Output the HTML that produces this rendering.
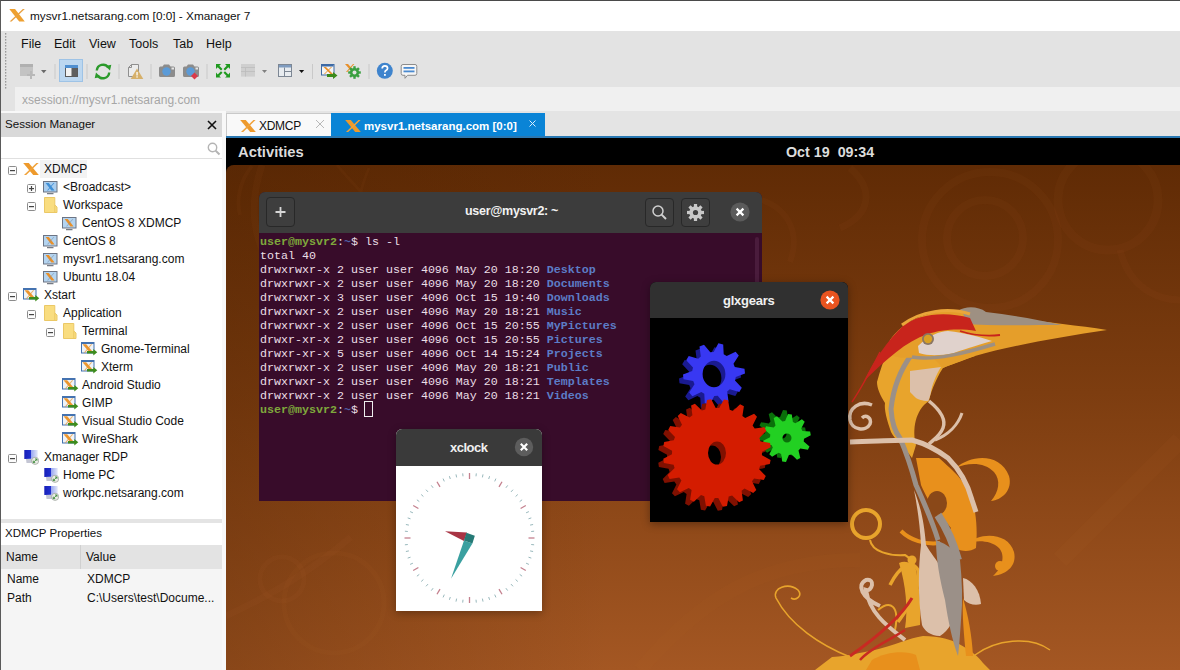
<!DOCTYPE html>
<html><head><meta charset="utf-8">
<style>
*{margin:0;padding:0;box-sizing:border-box}
html,body{width:1180px;height:670px;overflow:hidden;background:#fff;font-family:"Liberation Sans",sans-serif;font-size:12px;color:#000}
.a{position:absolute;white-space:nowrap}
#title{left:0;top:0;width:1180px;height:31px;background:#fff;border-top:1px solid #4a4a4a;border-left:1px solid #5a5a5a}
#tools{left:0;top:31px;width:1180px;height:56px;background:#e3e3e3;border-left:1px solid #5a5a5a}
#addr{left:0;top:87px;width:1180px;height:24px;background:#e3e3e3;border-left:1px solid #5a5a5a}
#tabs{left:226px;top:111px;width:954px;height:25px;background:#e4e4e4}
#blue{left:226px;top:136px;width:954px;height:2px;background:#2a78b2}
#leftpane{left:0;top:111px;width:226px;height:559px;background:#f8f8f8;border-left:1px solid #5a5a5a}
.menu{top:37px;font-size:12.5px;color:#111}
.tree{font-size:12px;color:#111}
.mono{font-family:"Liberation Mono",monospace;font-size:11.67px;line-height:14px;color:#ebdfe6}
.pg{color:#7fa83c;font-weight:bold}
.pc{color:#5060a8;font-weight:bold}
.dir{color:#5c7cc6;font-weight:bold}
.cur{display:inline-block;width:8.5px;height:15.5px;border:1px solid #eee;vertical-align:-3px}
</style></head><body>
<svg width="0" height="0" style="position:absolute">
<defs>
<symbol id="xlogo" viewBox="0 0 16 13">
<path d="M0.3 0 L6 0 L15.8 12.5 L10.2 12.5 Z" fill="#eea030"/>
<path d="M13.8 0 L15.8 0 L2.6 12.5 L0.6 12.5 Z" fill="#e8a040"/>
</symbol>

<symbol id="xo" viewBox="0 0 16 12">
<path d="M0.2 0 H5.8 L15.8 12 H10.2 Z" fill="#ee9a2c"/>
<path d="M13.4 0 H15.6 L3.2 12 H1 Z" fill="#f0a23a"/>
</symbol>
<symbol id="sess" viewBox="0 0 15 14">
<rect x="0.5" y="0.5" width="13.5" height="10.5" fill="#b4d4f0" stroke="#6c7484"/>
<path d="M2.6 2 H5.8 L11.6 9.6 H8.4 Z" fill="#e8902a"/>
<path d="M10.4 2 H11.4 L5 9.6 H4 Z" fill="#7c8ea0" fill-opacity="0.6"/>
<rect x="4" y="12.2" width="6.5" height="1" fill="#555b66"/>
</symbol>
<symbol id="bcast" viewBox="0 0 15 14">
<rect x="0.5" y="0.5" width="13.5" height="10.5" fill="#a9cdee" stroke="#6c7484"/>
<path d="M2.6 2 H5.8 L11.6 9.6 H8.4 Z" fill="#3f8fd6"/>
<path d="M10.4 2 H11.4 L5 9.6 H4 Z" fill="#3f8fd6"/>
<rect x="4" y="12.2" width="6.5" height="1" fill="#555b66"/>
</symbol>
<symbol id="folder" viewBox="0 0 14 16">
<path d="M0.5 0.5 H10.8 V8 L13 10 V15.5 H0.5 Z" fill="#f9dd80" stroke="#ebc866"/>
<path d="M10.8 8 V15.5" stroke="#ebc866"/>
</symbol>
<symbol id="xstart" viewBox="0 0 17 15">
<rect x="0.5" y="0.5" width="12.5" height="10.5" fill="#eef3f8" stroke="#4573b0"/>
<rect x="0.5" y="0.5" width="12.5" height="1.5" fill="#4573b0"/>
<path d="M1.5 2.2 H5.2 L12.6 10.8 H8.9 Z" fill="#ec962e"/>
<path d="M10 2.2 H11.2 L4 10.8 H2.8 Z" fill="#ec962e" fill-opacity="0.75"/>
<path d="M6 9 H12.3 V7 L16.3 10.3 L12.3 13.6 V11.6 H6 Z" fill="#3d8c1c"/>
</symbol>
<symbol id="rdp" viewBox="0 0 16 15">
<defs><linearGradient id="rg" x1="0" x2="1" y1="0" y2="0"><stop offset="0" stop-color="#1820b8"/><stop offset="0.48" stop-color="#2030d0"/><stop offset="0.52" stop-color="#9aa8f0"/><stop offset="1" stop-color="#e4e8f8"/></linearGradient></defs>
<path d="M1.3 0 H14.7 V8.5 L1.3 9 Z" fill="url(#rg)"/>
<path d="M3 9 H10 L10.5 13 H3.5 Z" fill="#c4c6d4"/>
<circle cx="12.1" cy="10.8" r="3.6" fill="#eceee8" stroke="#a0a4a0" stroke-width="0.8"/>
<path d="M10.3 12.6 L13.9 9 M12 9 H13.9 V10.9 M10.3 10.7 V12.6 H12.2" fill="none" stroke="#3d8a3a" stroke-width="0.9"/>
</symbol>
<symbol id="em" viewBox="0 0 9 9">
<rect x="0.5" y="0.5" width="8" height="8" rx="1" fill="#fcfcfc" stroke="#8c8c8c"/>
<rect x="2" y="4" width="5" height="1.2" fill="#444"/>
</symbol>
<symbol id="ep" viewBox="0 0 9 9">
<rect x="0.5" y="0.5" width="8" height="8" rx="1" fill="#fcfcfc" stroke="#8c8c8c"/>
<rect x="2" y="4" width="5" height="1.2" fill="#444"/>
<rect x="3.9" y="2" width="1.2" height="5" fill="#444"/>
</symbol>
</defs>
</svg>

<!-- title bar -->
<div class="a" id="title"></div>
<svg class="a" style="left:9px;top:9px" width="16" height="13"><use href="#xlogo"/></svg>
<div class="a" style="left:30px;top:9px;font-size:11.8px;color:#111">mysvr1.netsarang.com [0:0] - Xmanager 7</div>

<!-- toolbar -->
<div class="a" id="tools"></div>
<div class="a" id="addr"></div>
<div class="a" style="left:15px;top:87px;width:1165px;height:24px;background:#f0f0f0"></div>
<div class="a" style="left:22px;top:93px;font-size:12px;color:#a6a6a6">xsession://mysvr1.netsarang.com</div>

<div class="a menu" style="left:21px">File</div>
<div class="a menu" style="left:54px">Edit</div>
<div class="a menu" style="left:89px">View</div>
<div class="a menu" style="left:129px">Tools</div>
<div class="a menu" style="left:173px">Tab</div>
<div class="a menu" style="left:206px">Help</div>


<!-- toolbar icons -->
<svg class="a" style="left:0;top:0" width="430" height="90" viewBox="0 0 430 90">
<!-- gripper -->
<g fill="#9a9a9a"><rect x="5" y="33" width="1.3" height="1.6"/><rect x="5" y="36" width="1.3" height="1.6"/><rect x="5" y="39" width="1.3" height="1.6"/><rect x="5" y="42" width="1.3" height="1.6"/><rect x="5" y="45" width="1.3" height="1.6"/><rect x="5" y="48" width="1.3" height="1.6"/><rect x="5" y="51" width="1.3" height="1.6"/><rect x="5" y="54" width="1.3" height="1.6"/><rect x="5" y="57" width="1.3" height="1.6"/><rect x="5" y="60" width="1.3" height="1.6"/><rect x="5" y="63" width="1.3" height="1.6"/><rect x="5" y="66" width="1.3" height="1.6"/><rect x="5" y="69" width="1.3" height="1.6"/><rect x="5" y="72" width="1.3" height="1.6"/><rect x="5" y="75" width="1.3" height="1.6"/><rect x="5" y="78" width="1.3" height="1.6"/><rect x="5" y="81" width="1.3" height="1.6"/><rect x="5" y="84" width="1.3" height="1.6"/><rect x="5" y="87" width="1.3" height="1.6"/><rect x="5" y="90" width="1.3" height="1.6"/><rect x="5" y="93" width="1.3" height="1.6"/><rect x="5" y="96" width="1.3" height="1.6"/><rect x="5" y="99" width="1.3" height="1.6"/><rect x="5" y="102" width="1.3" height="1.6"/><rect x="5" y="105" width="1.3" height="1.6"/><rect x="5" y="108" width="1.3" height="1.6"/></g>
<!-- new (grey) -->
<rect x="20" y="64" width="13" height="12" fill="#c3c3c3"/>
<rect x="20" y="64" width="13" height="3" fill="#b0b0b0"/>
<path d="M31 71 v8 M27 75 h8" stroke="#b8b8b8" stroke-width="2"/>
<path d="M41 70 h5.5 l-2.75 3.2 z" fill="#6a6a6a"/>
<g fill="#c9c9c9"><rect x="54.5" y="64" width="1" height="15"/><rect x="86.5" y="64" width="1" height="15"/><rect x="118.5" y="64" width="1" height="15"/><rect x="150.5" y="64" width="1" height="15"/><rect x="206.5" y="64" width="1" height="15"/><rect x="312" y="64" width="1" height="15"/><rect x="368.5" y="64" width="1" height="15"/></g>
<!-- active button -->
<rect x="59.5" y="59.5" width="23" height="22" fill="#bcd7f0" stroke="#9ec3e6"/>
<rect x="65" y="65" width="13" height="12" fill="#5a5a5a"/>
<rect x="65" y="65" width="13" height="3" fill="#4f8fd0"/>
<rect x="66" y="68" width="5.5" height="8" fill="#f2f2f2"/>
<rect x="72" y="68" width="5" height="8" fill="#5e5e5e"/>
<!-- refresh -->
<g fill="none" stroke="#2b9a2b" stroke-width="2.4">
<path d="M96.8 70.5 A6.3 6.3 0 0 1 108.3 67.5"/>
<path d="M109.2 72.5 A6.3 6.3 0 0 1 97.7 75.5"/>
</g>
<path d="M105.5 66 L111.3 64.8 L110 70.5 Z" fill="#2b9a2b"/>
<path d="M100.5 77 L94.7 78.2 L96 72.5 Z" fill="#2b9a2b"/>
<!-- doc warning -->
<path d="M128.5 67.5 L131.5 64.5 H138.5 V76.5 H128.5 Z" fill="#ececec" stroke="#8f8f8f"/>
<path d="M128.5 67.5 H131.5 V64.5" fill="none" stroke="#8f8f8f"/>
<path d="M137 68.5 L143.3 79 H130.7 Z" fill="#d6b06a"/>
<rect x="136.4" y="72" width="1.3" height="3.5" fill="#fff"/><rect x="136.4" y="76.3" width="1.3" height="1.3" fill="#fff"/>
<!-- cameras -->
<g>
<path d="M159 68 Q159 66.5 160.5 66.5 H162.5 L164 64.5 H169 L170.5 66.5 H173.5 Q175 66.5 175 68 V75.5 Q175 77 173.5 77 H160.5 Q159 77 159 75.5 Z" fill="#8c8c8c"/>
<circle cx="166.5" cy="71.5" r="4.2" fill="#5b9bd8"/>
<rect x="171.5" y="67.5" width="2.5" height="2" fill="#e6e6e6"/>
</g>
<g>
<path d="M183 68 Q183 66.5 184.5 66.5 H186.5 L188 64.5 H193 L194.5 66.5 H197.5 Q199 66.5 199 68 V75.5 Q199 77 197.5 77 H184.5 Q183 77 183 75.5 Z" fill="#8c8c8c"/>
<circle cx="190.5" cy="71.5" r="4.2" fill="#5b9bd8"/>
<rect x="195.5" y="67.5" width="2.5" height="2" fill="#e6e6e6"/>
<path d="M194.5 72.5 L198 76 L194.5 79.5 L191 76 Z" fill="#d93a4a"/>
</g>
<!-- fullscreen -->
<g fill="#1f9a1f">
<path d="M216 64 H221 L219.3 65.7 L222.5 68.9 L221 70.4 L217.7 67.2 L216 69 Z"/>
<path d="M230 64 H225 L226.7 65.7 L223.5 68.9 L225 70.4 L228.3 67.2 L230 69 Z"/>
<path d="M216 77.6 H221 L219.3 75.9 L222.5 72.7 L221 71.2 L217.7 74.4 L216 72.6 Z"/>
<path d="M230 77.6 H225 L226.7 75.9 L223.5 72.7 L225 71.2 L228.3 74.4 L230 72.6 Z"/>
</g>
<!-- grey table -->
<rect x="241" y="64" width="14" height="12.6" fill="#cfcfcf"/>
<path d="M241 67.5 H255 M245.5 67.5 V76.6 M241 71.5 H255" stroke="#bdbdbd" stroke-width="0.8"/>
<path d="M262 70 h5 l-2.5 3 z" fill="#808080"/>
<!-- layout -->
<rect x="278.5" y="64.5" width="13" height="12" fill="#e8ecf0" stroke="#7d8794"/>
<rect x="279" y="65" width="12" height="2.5" fill="#7f9cc0"/>
<path d="M284.5 67.5 V76.5 M284.5 71.5 H291" stroke="#7d8794" stroke-width="1"/>
<path d="M299 70 h5.2 l-2.6 3 z" fill="#111"/>
<!-- xstart -->
<rect x="321.5" y="64.5" width="12.5" height="10.5" fill="#f4f4f4" stroke="#3d6aa5"/>
<rect x="322" y="65" width="11.5" height="1.5" fill="#3d6aa5"/>
<path d="M323.5 67 L326 67 L333 74 L330.5 74 Z" fill="#e8902a"/>
<path d="M331 67 L332 67 L325 74 L324 74 Z" fill="#e8902a"/>
<path d="M327 74 H333 V72 L337.5 75.5 L333 79 V77 H327 Z" fill="#3b8a1a"/>
<!-- x gear -->
<path d="M345 64 L348 64 L355 72 L352 72 Z" fill="#e8902a"/>
<path d="M353 64 L354.3 64 L347.3 72 L346 72 Z" fill="#e8902a"/>
<g transform="translate(354.5 72.5)" fill="#3aa040">
<circle r="4.6"/>
<g id="teeth"><rect x="-1.2" y="-6.3" width="2.4" height="12.6"/><rect x="-1.2" y="-6.3" width="2.4" height="12.6" transform="rotate(45)"/><rect x="-1.2" y="-6.3" width="2.4" height="12.6" transform="rotate(90)"/><rect x="-1.2" y="-6.3" width="2.4" height="12.6" transform="rotate(135)"/></g>
<circle r="2" fill="#e3e3e3"/>
</g>
<!-- help -->
<circle cx="384.8" cy="70.8" r="8" fill="#3f84cd"/>
<path d="M382.2 68.6 Q382.2 65.8 384.9 65.8 Q387.6 65.8 387.6 68.3 Q387.6 69.8 385.9 70.6 Q384.9 71.1 384.9 72.5" fill="none" stroke="#fff" stroke-width="1.7"/>
<rect x="384" y="74" width="1.8" height="1.8" fill="#fff"/>
<!-- chat -->
<path d="M403 64.5 H415 Q416.8 64.5 416.8 66.3 V73.5 Q416.8 75.3 415 75.3 H407.5 L405 78.3 V75.3 H403 Q401.2 75.3 401.2 73.5 V66.3 Q401.2 64.5 403 64.5 Z" fill="#f6f6f6" stroke="#8c8c8c" stroke-width="1"/>
<rect x="403.5" y="67" width="11" height="1.8" fill="#4a8ad0"/>
<rect x="403.5" y="70.5" width="11" height="1.8" fill="#4a8ad0"/>
</svg>

<!-- left pane -->
<div class="a" id="leftpane"></div>
<div class="a" style="left:1px;top:113px;width:221px;height:24px;background:#d9d9d9"></div>
<div class="a" style="left:5px;top:117px;font-size:11.6px;color:#111">Session Manager</div>
<div class="a" style="left:1px;top:137px;width:221px;height:22px;background:#fff;border-bottom:1px solid #e0e0e0"></div>
<div class="a" style="left:1px;top:159px;width:221px;height:360px;background:#fff"></div>
<svg class="a" style="left:206px;top:119px" width="12" height="12" viewBox="0 0 12 12"><path d="M2 2 L10 10 M10 2 L2 10" stroke="#111" stroke-width="1.6"/></svg>
<svg class="a" style="left:206px;top:140px" width="16" height="16" viewBox="0 0 16 16"><circle cx="6.5" cy="7.5" r="4.2" fill="none" stroke="#b4b4b4" stroke-width="1.4"/><path d="M9.6 10.6 L13.5 14.5" stroke="#b4b4b4" stroke-width="2"/></svg>

<div class="a" style="left:1px;top:519px;width:221px;height:4px;background:#e4e4e4"></div>
<div class="a" style="left:1px;top:523px;width:221px;height:22px;background:#fff"></div>
<div class="a" style="left:5px;top:527px;font-size:11.5px;color:#111">XDMCP Properties</div>
<div class="a" style="left:1px;top:545px;width:221px;height:24px;background:#e3e3e3"></div>
<div class="a" style="left:80px;top:545px;width:1px;height:24px;background:#d0d0d0"></div>
<div class="a" style="left:6px;top:550px;font-size:12px;color:#111">Name</div>
<div class="a" style="left:86px;top:550px;font-size:12px;color:#111">Value</div>
<div class="a" style="left:1px;top:569px;width:221px;height:101px;background:#f5f5f5"></div>
<div class="a" style="left:7px;top:572px;font-size:12px;color:#111">Name</div>
<div class="a" style="left:87px;top:572px;font-size:12px;color:#111">XDMCP</div>
<div class="a" style="left:7px;top:591px;font-size:12px;color:#111">Path</div>
<div class="a" style="left:87px;top:591px;font-size:12px;color:#111">C:\Users\test\Docume...</div>

<!-- tree -->
<div class="a" style="left:40px;top:160px;width:47px;height:18px;background:#f3f3f3"></div>
<svg class="a" style="left:8px;top:166px" width="9" height="9"><use href="#em"/></svg>
<svg class="a" style="left:23px;top:163px" width="16" height="12"><use href="#xo"/></svg>
<div class="a tree" style="left:44px;top:160px;line-height:18px">XDMCP</div>
<svg class="a" style="left:27px;top:184px" width="9" height="9"><use href="#ep"/></svg>
<svg class="a" style="left:43px;top:181px" width="15" height="14"><use href="#bcast"/></svg>
<div class="a tree" style="left:63px;top:178px;line-height:18px">&lt;Broadcast&gt;</div>
<svg class="a" style="left:27px;top:202px" width="9" height="9"><use href="#em"/></svg>
<svg class="a" style="left:44px;top:197px" width="14" height="16"><use href="#folder"/></svg>
<div class="a tree" style="left:63px;top:196px;line-height:18px">Workspace</div>
<svg class="a" style="left:62px;top:217px" width="15" height="14"><use href="#sess"/></svg>
<div class="a tree" style="left:82px;top:214px;line-height:18px">CentOS 8 XDMCP</div>
<svg class="a" style="left:43px;top:235px" width="15" height="14"><use href="#sess"/></svg>
<div class="a tree" style="left:63px;top:232px;line-height:18px">CentOS 8</div>
<svg class="a" style="left:43px;top:253px" width="15" height="14"><use href="#sess"/></svg>
<div class="a tree" style="left:63px;top:250px;line-height:18px">mysvr1.netsarang.com</div>
<svg class="a" style="left:43px;top:271px" width="15" height="14"><use href="#sess"/></svg>
<div class="a tree" style="left:63px;top:268px;line-height:18px">Ubuntu 18.04</div>
<svg class="a" style="left:8px;top:292px" width="9" height="9"><use href="#em"/></svg>
<svg class="a" style="left:23px;top:288px" width="17" height="15"><use href="#xstart"/></svg>
<div class="a tree" style="left:44px;top:286px;line-height:18px">Xstart</div>
<svg class="a" style="left:27px;top:310px" width="9" height="9"><use href="#em"/></svg>
<svg class="a" style="left:44px;top:305px" width="14" height="16"><use href="#folder"/></svg>
<div class="a tree" style="left:63px;top:304px;line-height:18px">Application</div>
<svg class="a" style="left:46px;top:328px" width="9" height="9"><use href="#em"/></svg>
<svg class="a" style="left:63px;top:323px" width="14" height="16"><use href="#folder"/></svg>
<div class="a tree" style="left:82px;top:322px;line-height:18px">Terminal</div>
<svg class="a" style="left:81px;top:342px" width="17" height="15"><use href="#xstart"/></svg>
<div class="a tree" style="left:101px;top:340px;line-height:18px">Gnome-Terminal</div>
<svg class="a" style="left:81px;top:360px" width="17" height="15"><use href="#xstart"/></svg>
<div class="a tree" style="left:101px;top:358px;line-height:18px">Xterm</div>
<svg class="a" style="left:62px;top:378px" width="17" height="15"><use href="#xstart"/></svg>
<div class="a tree" style="left:82px;top:376px;line-height:18px">Android Studio</div>
<svg class="a" style="left:62px;top:396px" width="17" height="15"><use href="#xstart"/></svg>
<div class="a tree" style="left:82px;top:394px;line-height:18px">GIMP</div>
<svg class="a" style="left:62px;top:414px" width="17" height="15"><use href="#xstart"/></svg>
<div class="a tree" style="left:82px;top:412px;line-height:18px">Visual Studio Code</div>
<svg class="a" style="left:62px;top:432px" width="17" height="15"><use href="#xstart"/></svg>
<div class="a tree" style="left:82px;top:430px;line-height:18px">WireShark</div>
<svg class="a" style="left:8px;top:454px" width="9" height="9"><use href="#em"/></svg>
<svg class="a" style="left:23px;top:450px" width="16" height="15"><use href="#rdp"/></svg>
<div class="a tree" style="left:44px;top:448px;line-height:18px">Xmanager RDP</div>
<svg class="a" style="left:43px;top:468px" width="16" height="15"><use href="#rdp"/></svg>
<div class="a tree" style="left:63px;top:466px;line-height:18px">Home PC</div>
<svg class="a" style="left:43px;top:486px" width="16" height="15"><use href="#rdp"/></svg>
<div class="a tree" style="left:63px;top:484px;line-height:18px">workpc.netsarang.com</div>

<!-- tabs -->
<div class="a" id="tabs"></div>
<div class="a" style="left:226px;top:113px;width:106px;height:23px;background:#f9f9f9;border:1px solid #c9c9c9;border-bottom:none"></div>
<svg class="a" style="left:240px;top:120px" width="16" height="12"><use href="#xo"/></svg>
<div class="a" style="left:259px;top:119px;font-size:12px;color:#111;letter-spacing:-0.3px">XDMCP</div>
<svg class="a" style="left:314px;top:118px" width="12" height="12" viewBox="0 0 12 12"><path d="M2 2 L10 10 M10 2 L2 10" stroke="#b8b8b8" stroke-width="1"/></svg>
<div class="a" style="left:331px;top:113px;width:214px;height:23px;background:#0a84d6"></div>
<svg class="a" style="left:345px;top:120px" width="16" height="12"><use href="#xo"/></svg>
<div class="a" style="left:364px;top:120px;font-size:11.5px;font-weight:bold;color:#fff">mysvr1.netsarang.com [0:0]</div>
<svg class="a" style="left:527px;top:118px" width="12" height="12" viewBox="0 0 12 12"><path d="M2.5 2.5 L8.5 8.5 M8.5 2.5 L2.5 8.5" stroke="#d8eeff" stroke-width="1"/></svg>
<div class="a" id="blue"></div>

<!-- desktop -->
<div class="a" style="left:226px;top:138px;width:954px;height:532px;background:#000"></div>
<div class="a" style="left:226px;top:165px;width:954px;height:505px;border-radius:8px 0 0 0;overflow:hidden">
<svg width="954" height="505" viewBox="226 165 954 505" style="display:block">
<defs>
<linearGradient id="dg" x1="0" y1="0" x2="0" y2="1">
<stop offset="0" stop-color="#602b05"/>
<stop offset="0.45" stop-color="#7d3d10"/>
<stop offset="1" stop-color="#a45723"/>
</linearGradient>
<radialGradient id="dr" cx="0.05" cy="0.95" r="0.5">
<stop offset="0" stop-color="#6a3008" stop-opacity="0.35"/>
<stop offset="1" stop-color="#6a3008" stop-opacity="0"/>
</radialGradient>
<linearGradient id="dh" x1="0" y1="0" x2="1" y2="0"><stop offset="0" stop-color="#4a2000" stop-opacity="0.3"/><stop offset="0.4" stop-color="#4a2000" stop-opacity="0"/></linearGradient>
</defs>
<rect x="226" y="165" width="954" height="505" fill="url(#dg)"/>

<rect x="226" y="165" width="954" height="505" fill="url(#dh)"/>
<!-- faint swirls -->
<g fill="none" stroke="#c87a3a" stroke-opacity="0.045" stroke-width="7">
<path d="M262 165 C250 200 250 240 275 270"/>
<path d="M850 168 C875 190 870 215 840 228"/>
<path d="M762 200 C790 210 800 235 790 262" stroke-width="6"/>
<path d="M337 165 C345 175 355 185 361 192 M361 192 C363 182 366 175 369 168" stroke-width="3"/>
<path d="M252 166 C240 180 236 200 240 215" stroke-width="4"/>
<circle cx="990" cy="240" r="68" stroke-width="8"/>
<circle cx="985" cy="238" r="38" stroke-width="8"/>
<circle cx="1108" cy="200" r="50" stroke-width="9"/>
<path d="M1120 250 C1130 290 1160 300 1180 300" stroke-width="7"/>
<circle cx="282" cy="579" r="22" stroke-width="5"/>
<circle cx="334" cy="603" r="50" stroke-width="5" stroke-opacity="0.05"/>
<path d="M226 616 C260 600 300 580 351 537"/>
<path d="M1060 560 C1100 520 1150 470 1180 440" stroke-width="18" stroke-opacity="0.05"/>
<path d="M640 670 C700 600 760 560 860 560" stroke-width="14" stroke-opacity="0.04"/>
</g>
<!-- heron -->
<g>
<!-- bottom yellow mass -->
<path d="M832 657 C850 656 862 652 871 651 C895 645 910 638 923 636 C940 636 952 640 959 644 C970 650 978 656 983 663 L990 670 L815 670 Z" fill="#e8a42c"/>
<path d="M872 660 C885 652 905 650 916 655 L920 670 L866 670 Z" fill="#e8901c"/>
<path d="M975 655 C995 640 1030 635 1050 650" fill="none" stroke="#e8a42c" stroke-width="1.5"/>
<!-- thin swirl tail -->
<path d="M776 598 C772 588 788 582 798 590 C803 596 796 601 791 598 M776 598 C790 625 820 645 850 657" fill="none" stroke="#e8a42c" stroke-width="1.6"/>
<!-- yellow ring -->
<circle cx="866" cy="524" r="14" fill="none" stroke="#e8a42c" stroke-width="4"/>
<path d="M870 540 C872 552 890 556 905 555 C915 560 920 580 910 600" fill="none" stroke="#e8a42c" stroke-width="2"/>
<!-- orange arcs right -->
<path d="M956 468 C970 455 1000 452 1009 476 C1013 490 1002 500 991 501 C999 492 1001 480 994 472 C985 462 968 462 956 468 Z" fill="#e8901c"/>
<path d="M966 544 C980 532 1008 532 1014 552 C1017 565 1008 574 993 576 C1002 568 1006 556 999 548 C990 540 976 540 966 544 Z" fill="#e8901c"/>
<circle cx="1000" cy="566" r="5" fill="#e8901c"/>
<path d="M901 531 C910 540 925 545 940 543" fill="none" stroke="#e8901c" stroke-width="4"/>
<!-- yellow swirls left -->
<path d="M890 585 C900 565 912 560 918 570 C922 590 905 612 898 622" fill="none" stroke="#e8a42c" stroke-width="3.5"/>
<circle cx="912" cy="560" r="4.5" fill="#e8a42c"/>
<path d="M878 610 C890 600 900 605 895 630" fill="none" stroke="#e8a42c" stroke-width="2"/>
<!-- neck yellow -->
<path d="M887 352 C895 348 910 348 925 352 L975 348 L975 356 C962 361 950 365 943 368 C935 380 930 395 929 401 C915 410 912 430 916 445 L912 458 C905 448 895 440 891 432 C887 420 884 410 885 403 C880 395 877 388 877 382 C880 370 884 360 887 352 Z" fill="#e8a42c"/>
<!-- orange lower neck/body -->
<path d="M916 458 L939 458 C950 468 958 475 962 481 C970 495 975 505 975 512 C977 525 977 535 976 548 C970 552 962 552 955 548 C950 540 948 532 951 528 C945 520 940 515 937 515 C928 500 923 490 921 485 Z" fill="#e8901c"/>
<ellipse cx="937" cy="503" rx="10" ry="12" fill="#8a4818"/>
<path d="M963 598 C968 615 972 635 973 656 L966 656 C964 635 962 615 963 598 Z" fill="#e8901c"/>
<path d="M899 563 C905 560 912 562 916 570 C920 590 921 610 920 625 L905 628 C908 610 906 585 899 563 Z" fill="#e8a42c"/>
<!-- beige patches -->
<path d="M910 371 L941 367 C936 375 932 385 931 392 C930 396 929 400 928 401 C922 401 918 399 916 398 C913 395 911 393 910 392 Z" fill="#dcc0aa"/>
<path d="M914 490 C920 505 924 520 926 545 C935 560 950 575 955 600 C958 615 950 630 940 636 C930 636 924 630 922 625 C918 600 918 570 921 545 C920 525 917 505 914 490 Z" fill="#dcc0aa"/>
<path d="M963 578 C972 580 980 590 981 604 C975 606 968 604 964 600 Z" fill="#dcc0aa"/>
<!-- grey stripes -->
<path d="M912 354 C900 370 893 390 891 409 C892 425 895 432 900 438 C906 452 912 470 916 485 C925 505 932 520 938 540" fill="none" stroke="#9b9088" stroke-width="5"/>
<path d="M936 540 C948 545 956 550 960 560 C962 580 963 600 961 620 C960 635 959 648 958 656 C952 640 948 620 945 600 C940 580 936 560 936 540 Z" fill="#9b9088"/>
<path d="M938 515 C948 530 954 545 958 560" fill="none" stroke="#9b9088" stroke-width="8"/>
<!-- beige swirl branches -->
<path d="M850 442 C880 441 900 440 912 440 C930 445 940 452 948 458 C960 470 968 485 972 500 L976 512" fill="none" stroke="#dcc0aa" stroke-width="5"/>
<path d="M929 401 C940 410 946 420 943 428 C940 436 933 440 929 444" fill="none" stroke="#dcc0aa" stroke-width="3.5"/>
<path d="M935 440 C948 435 958 425 962 413" fill="none" stroke="#dcc0aa" stroke-width="3"/>
<path d="M872 405 C860 400 848 408 850 420 C852 430 866 432 870 424 C872 418 866 414 862 418" fill="none" stroke="#dcc0aa" stroke-width="3.5"/>
<path d="M880 606 C862 598 856 585 866 580 C876 578 872 592 866 590 C870 615 890 628 905 640" fill="none" stroke="#dcc0aa" stroke-width="4"/>
<!-- red streaks -->
<path d="M912 598 C902 615 880 635 850 656" fill="none" stroke="#c82a22" stroke-width="3"/>
<path d="M905 630 C890 640 870 648 860 660" fill="none" stroke="#c82a22" stroke-width="2.5"/>
<!-- beak -->
<path d="M955 313 C1000 317 1060 323 1107 330 C1060 337 1010 346 975 356 C960 361 950 365 943 368 L925 350 Z" fill="#e59e2a"/>
<path d="M958 311 C965 306 978 306 986 312 C1010 315 1035 319 1062 325 C1030 325 995 326 962 324 Z" fill="#9e9082"/>
<!-- head -->
<path d="M890 340 C905 318 935 308 962 311 L970 330 C960 345 945 352 925 356 C910 358 895 360 887 352 Z" fill="#e59e2a"/>
<!-- red crest -->
<path d="M903 326 C918 314 945 311 970 318 L976 331 C958 328 940 330 928 334 C905 342 888 358 864 381 C874 360 888 340 903 326 Z" fill="#c8241c"/>
<path d="M902 325 C920 311 948 307 970 314" fill="none" stroke="#eaa63a" stroke-width="3"/>
<path d="M960 331 C975 336 990 336 1000 335" fill="none" stroke="#c8241c" stroke-width="1.8"/>
<path d="M880 352 C870 372 860 390 852 402" fill="none" stroke="#c8241c" stroke-width="1.5"/>
<!-- face -->
<path d="M918 346 C928 336 940 331 948 331 C965 333 980 337 992 341 C975 346 962 350 954 353 C940 356 928 356 919 353 Z" fill="#e0d2cc"/>
<path d="M912 357 C935 361 965 353 995 344" fill="none" stroke="#9e9082" stroke-width="3.5"/>
<circle cx="928" cy="339" r="6" fill="#8a7664"/>
<circle cx="928" cy="339" r="4.2" fill="#d8a024"/>
</g>
</svg></div>
<div class="a" style="left:238px;top:144px;font-size:14.8px;font-weight:bold;color:#dcdcdc">Activities</div>
<div class="a" style="left:786px;top:144px;font-size:14.3px;font-weight:bold;color:#dcdcdc">Oct 19&nbsp; 09:34</div>


<!-- terminal -->
<div class="a" style="left:259px;top:192px;width:503px;height:309px;background:#380c2a;border-radius:6px 6px 0 0;overflow:hidden">
  <div class="a" style="left:0;top:0;width:503px;height:41px;background:#3c3c3c"></div>
</div>
<div class="a" style="left:266px;top:197px;width:29px;height:30px;border:1px solid #282828;border-radius:4px;background:#3e3e3e"></div>
<svg class="a" style="left:266px;top:197px" width="29" height="30" viewBox="0 0 29 30"><path d="M14.5 10 V20 M9.5 15 H19.5" stroke="#d6d6d6" stroke-width="1.8"/></svg>
<div class="a" style="left:465px;top:204px;font-size:12.5px;letter-spacing:-0.3px;font-weight:bold;color:#f2f2f2">user@mysvr2: ~</div>
<div class="a" style="left:645px;top:198px;width:29px;height:29px;border:1px solid #282828;border-radius:4px;background:#3e3e3e"></div>
<svg class="a" style="left:645px;top:198px" width="29" height="29" viewBox="0 0 29 29"><circle cx="13" cy="13" r="5" fill="none" stroke="#d0d0d0" stroke-width="1.5"/><path d="M16.6 16.6 L21 21" stroke="#d0d0d0" stroke-width="2"/></svg>
<div class="a" style="left:681px;top:198px;width:29px;height:29px;border:1px solid #282828;border-radius:4px;background:#3e3e3e"></div>
<svg class="a" style="left:681px;top:198px" width="29" height="29" viewBox="0 0 29 29"><g transform="translate(14.5 14.5)" fill="#c8c8c8"><circle r="6.2"/><rect x="-1.6" y="-8.5" width="3.2" height="17"/><rect x="-1.6" y="-8.5" width="3.2" height="17" transform="rotate(45)"/><rect x="-1.6" y="-8.5" width="3.2" height="17" transform="rotate(90)"/><rect x="-1.6" y="-8.5" width="3.2" height="17" transform="rotate(135)"/><circle r="2.6" fill="#3e3e3e"/></g></svg>
<svg class="a" style="left:729px;top:201px" width="22" height="22" viewBox="0 0 22 22"><circle cx="11" cy="11" r="9.6" fill="#5b5b5b"/><path d="M7.6 7.6 L14.4 14.4 M14.4 7.6 L7.6 14.4" stroke="#fff" stroke-width="2.2"/></svg>
<div class="a" style="left:755px;top:237px;width:4px;height:258px;background:#4a1c3c;border-radius:2px"></div>
<pre class="a mono" style="left:260px;top:235px;white-space:pre"><span class="pg">user@mysvr2</span>:<span class="pc">~</span>$ ls -l
total 40
drwxrwxr-x 2 user user 4096 May 20 18:20 <span class="dir">Desktop</span>
drwxrwxr-x 2 user user 4096 May 20 18:20 <span class="dir">Documents</span>
drwxrwxr-x 3 user user 4096 Oct 15 19:40 <span class="dir">Downloads</span>
drwxrwxr-x 2 user user 4096 May 20 18:21 <span class="dir">Music</span>
drwxrwxr-x 2 user user 4096 Oct 15 20:55 <span class="dir">MyPictures</span>
drwxr-xr-x 2 user user 4096 Oct 15 20:55 <span class="dir">Pictures</span>
drwxr-xr-x 5 user user 4096 Oct 14 15:24 <span class="dir">Projects</span>
drwxrwxr-x 2 user user 4096 May 20 18:21 <span class="dir">Public</span>
drwxrwxr-x 2 user user 4096 May 20 18:21 <span class="dir">Templates</span>
drwxrwxr-x 2 user user 4096 May 20 18:21 <span class="dir">Videos</span>
<span class="pg">user@mysvr2</span>:<span class="pc">~</span>$ </pre>


<!-- glxgears -->
<div class="a" style="left:650px;top:282px;width:198px;height:240px;background:#000;border-radius:6px 6px 0 0;overflow:hidden;box-shadow:0 2px 8px rgba(0,0,0,0.35)">
  <div class="a" style="left:0;top:0;width:198px;height:36px;background:#303030"></div>
</div>
<div class="a" style="left:723px;top:293px;font-size:13px;letter-spacing:-0.25px;font-weight:bold;color:#f0f0f0">glxgears</div>
<svg class="a" style="left:819px;top:289px" width="22" height="22" viewBox="0 0 22 22"><circle cx="11" cy="11" r="9.6" fill="#e95420"/><path d="M7.6 7.6 L14.4 14.4 M14.4 7.6 L7.6 14.4" stroke="#fff" stroke-width="2.2"/></svg>
<svg class="a" style="left:650px;top:318px" width="198" height="204" viewBox="650 318 198 204">
<path d="M731.0 384.5 L737.8 391.7 L735.3 395.9 L725.8 393.3 L723.2 395.6 L724.5 405.4 L720.0 407.3 L713.7 399.7 L710.3 400.0 L705.6 408.7 L700.8 407.6 L700.3 397.7 L697.3 396.0 L688.4 400.2 L685.2 396.6 L690.5 388.3 L689.2 385.1 L679.5 383.3 L679.0 378.4 L688.2 374.9 L689.0 371.5 L682.2 364.3 L684.7 360.1 L694.2 362.7 L696.8 360.4 L695.5 350.6 L700.0 348.7 L706.3 356.3 L709.7 356.0 L714.4 347.3 L719.2 348.4 L719.7 358.3 L722.7 360.0 L731.6 355.8 L734.8 359.4 L729.5 367.7 L730.8 370.9 L740.5 372.7 L741.0 377.6 L731.8 381.1 Z M721.4 378.0 A11.4 13.2 0 1 0 698.6 378.0 A11.4 13.2 0 1 0 721.4 378.0 Z" fill="#1a1a90" fill-rule="evenodd"/>
<path d="M735.0 380.5 L741.8 387.7 L739.3 391.9 L729.8 389.3 L727.2 391.6 L728.5 401.4 L724.0 403.3 L717.7 395.7 L714.3 396.0 L709.6 404.7 L704.8 403.6 L704.3 393.7 L701.3 392.0 L692.4 396.2 L689.2 392.6 L694.5 384.3 L693.2 381.1 L683.5 379.3 L683.0 374.4 L692.2 370.9 L693.0 367.5 L686.2 360.3 L688.7 356.1 L698.2 358.7 L700.8 356.4 L699.5 346.6 L704.0 344.7 L710.3 352.3 L713.7 352.0 L718.4 343.3 L723.2 344.4 L723.7 354.3 L726.7 356.0 L735.6 351.8 L738.8 355.4 L733.5 363.7 L734.8 366.9 L744.5 368.7 L745.0 373.6 L735.8 377.1 Z M725.4 374.0 A11.4 13.2 0 1 0 702.6 374.0 A11.4 13.2 0 1 0 725.4 374.0 Z" fill="#3838f2" fill-rule="evenodd"/>
<path d="M798.7 437.4 L804.5 442.4 L802.9 445.8 L795.3 444.6 L793.5 446.5 L795.3 454.0 L792.0 455.8 L786.6 450.4 L783.9 450.9 L781.0 458.0 L777.2 457.5 L776.1 449.9 L773.6 448.8 L767.1 452.8 L764.3 450.2 L767.8 443.4 L766.5 441.1 L758.9 440.4 L758.2 436.7 L765.0 433.3 L765.3 430.6 L759.5 425.6 L761.1 422.2 L768.7 423.4 L770.5 421.5 L768.7 414.0 L772.0 412.2 L777.4 417.6 L780.1 417.1 L783.0 410.0 L786.8 410.5 L787.9 418.1 L790.4 419.2 L796.9 415.2 L799.7 417.8 L796.2 424.6 L797.5 426.9 L805.1 427.6 L805.8 431.3 L799.0 434.7 Z M786.5 434.0 A4.5 4.5 0 1 0 777.5 434.0 A4.5 4.5 0 1 0 786.5 434.0 Z" fill="#0a700a" fill-rule="evenodd"/>
<path d="M803.7 441.4 L809.5 446.4 L807.9 449.8 L800.3 448.6 L798.5 450.5 L800.3 458.0 L797.0 459.8 L791.6 454.4 L788.9 454.9 L786.0 462.0 L782.2 461.5 L781.1 453.9 L778.6 452.8 L772.1 456.8 L769.3 454.2 L772.8 447.4 L771.5 445.1 L763.9 444.4 L763.2 440.7 L770.0 437.3 L770.3 434.6 L764.5 429.6 L766.1 426.2 L773.7 427.4 L775.5 425.5 L773.7 418.0 L777.0 416.2 L782.4 421.6 L785.1 421.1 L788.0 414.0 L791.8 414.5 L792.9 422.1 L795.4 423.2 L801.9 419.2 L804.7 421.8 L801.2 428.6 L802.5 430.9 L810.1 431.6 L810.8 435.3 L804.0 438.7 Z M791.5 438.0 A4.5 4.5 0 1 0 782.5 438.0 A4.5 4.5 0 1 0 791.5 438.0 Z" fill="#22d022" fill-rule="evenodd"/>
<path d="M756.9 459.2 L765.6 463.9 L764.8 468.1 L755.2 469.7 L754.0 473.0 L760.8 480.1 L758.8 483.9 L749.1 482.4 L747.0 485.2 L751.3 494.1 L748.2 497.0 L739.5 492.6 L736.6 494.7 L737.9 504.4 L734.1 506.3 L727.1 499.4 L723.7 500.4 L722.0 510.1 L717.8 510.7 L713.3 502.0 L709.8 501.9 L705.1 510.6 L700.9 509.8 L699.3 500.2 L696.0 499.0 L688.9 505.8 L685.1 503.8 L686.6 494.1 L683.8 492.0 L674.9 496.3 L672.0 493.2 L676.4 484.5 L674.3 481.6 L664.6 482.9 L662.7 479.1 L669.6 472.1 L668.6 468.7 L658.9 467.0 L658.3 462.8 L667.0 458.3 L667.1 454.8 L658.4 450.1 L659.2 445.9 L668.8 444.3 L670.0 441.0 L663.2 433.9 L665.2 430.1 L674.9 431.6 L677.0 428.8 L672.7 419.9 L675.8 417.0 L684.5 421.4 L687.4 419.3 L686.1 409.6 L689.9 407.7 L696.9 414.6 L700.3 413.6 L702.0 403.9 L706.2 403.3 L710.7 412.0 L714.2 412.1 L718.9 403.4 L723.1 404.2 L724.7 413.8 L728.0 415.0 L735.1 408.2 L738.9 410.2 L737.4 419.9 L740.2 422.0 L749.1 417.7 L752.0 420.8 L747.6 429.5 L749.7 432.4 L759.4 431.1 L761.3 434.9 L754.4 441.9 L755.4 445.3 L765.1 447.0 L765.7 451.2 L757.0 455.7 Z M721.0 457.0 A9.0 11.5 0 1 0 703.0 457.0 A9.0 11.5 0 1 0 721.0 457.0 Z" fill="#801000" fill-rule="evenodd"/>
<path d="M761.9 455.2 L770.6 459.9 L769.8 464.1 L760.2 465.7 L759.0 469.0 L765.8 476.1 L763.8 479.9 L754.1 478.4 L752.0 481.2 L756.3 490.1 L753.2 493.0 L744.5 488.6 L741.6 490.7 L742.9 500.4 L739.1 502.3 L732.1 495.4 L728.7 496.4 L727.0 506.1 L722.8 506.7 L718.3 498.0 L714.8 497.9 L710.1 506.6 L705.9 505.8 L704.3 496.2 L701.0 495.0 L693.9 501.8 L690.1 499.8 L691.6 490.1 L688.8 488.0 L679.9 492.3 L677.0 489.2 L681.4 480.5 L679.3 477.6 L669.6 478.9 L667.7 475.1 L674.6 468.1 L673.6 464.7 L663.9 463.0 L663.3 458.8 L672.0 454.3 L672.1 450.8 L663.4 446.1 L664.2 441.9 L673.8 440.3 L675.0 437.0 L668.2 429.9 L670.2 426.1 L679.9 427.6 L682.0 424.8 L677.7 415.9 L680.8 413.0 L689.5 417.4 L692.4 415.3 L691.1 405.6 L694.9 403.7 L701.9 410.6 L705.3 409.6 L707.0 399.9 L711.2 399.3 L715.7 408.0 L719.2 408.1 L723.9 399.4 L728.1 400.2 L729.7 409.8 L733.0 411.0 L740.1 404.2 L743.9 406.2 L742.4 415.9 L745.2 418.0 L754.1 413.7 L757.0 416.8 L752.6 425.5 L754.7 428.4 L764.4 427.1 L766.3 430.9 L759.4 437.9 L760.4 441.3 L770.1 443.0 L770.7 447.2 L762.0 451.7 Z M726.0 453.0 A9.0 11.5 0 1 0 708.0 453.0 A9.0 11.5 0 1 0 726.0 453.0 Z" fill="#d41c00" fill-rule="evenodd"/>
</svg>

<!-- xclock -->
<div class="a" style="left:396px;top:429px;width:146px;height:182px;background:#fff;border-radius:6px 6px 0 0;overflow:hidden;box-shadow:0 2px 8px rgba(0,0,0,0.3)">
  <div class="a" style="left:0;top:0;width:146px;height:37px;background:#3a3a3a"></div>
</div>
<div class="a" style="left:450px;top:440px;font-size:13px;letter-spacing:-0.5px;font-weight:bold;color:#f0f0f0">xclock</div>
<svg class="a" style="left:513px;top:436px" width="22" height="22" viewBox="0 0 22 22"><circle cx="11" cy="11" r="9.2" fill="#5d5d5d"/><path d="M7.8 7.8 L14.2 14.2 M14.2 7.8 L7.8 14.2" stroke="#fff" stroke-width="2.2"/></svg>
<svg class="a" style="left:396px;top:466px" width="146" height="145" viewBox="396 466 146 145">
<line x1="469.5" y1="473.0" x2="469.5" y2="479.0" stroke="#c4808e" stroke-width="1.3"/><line x1="476.3" y1="473.4" x2="476.0" y2="476.3" stroke="#98b8bc" stroke-width="1.0"/><line x1="483.0" y1="474.4" x2="482.4" y2="477.4" stroke="#98b8bc" stroke-width="1.0"/><line x1="489.6" y1="476.2" x2="488.7" y2="479.0" stroke="#98b8bc" stroke-width="1.0"/><line x1="495.9" y1="478.6" x2="494.7" y2="481.4" stroke="#98b8bc" stroke-width="1.0"/><line x1="502.0" y1="481.7" x2="499.0" y2="486.9" stroke="#c4808e" stroke-width="1.3"/><line x1="507.7" y1="485.4" x2="505.9" y2="487.8" stroke="#98b8bc" stroke-width="1.0"/><line x1="513.0" y1="489.7" x2="511.0" y2="491.9" stroke="#98b8bc" stroke-width="1.0"/><line x1="517.8" y1="494.5" x2="515.6" y2="496.5" stroke="#98b8bc" stroke-width="1.0"/><line x1="522.1" y1="499.8" x2="519.7" y2="501.6" stroke="#98b8bc" stroke-width="1.0"/><line x1="525.8" y1="505.5" x2="520.6" y2="508.5" stroke="#c4808e" stroke-width="1.3"/><line x1="528.9" y1="511.6" x2="526.1" y2="512.8" stroke="#98b8bc" stroke-width="1.0"/><line x1="531.3" y1="517.9" x2="528.5" y2="518.8" stroke="#98b8bc" stroke-width="1.0"/><line x1="533.1" y1="524.5" x2="530.1" y2="525.1" stroke="#98b8bc" stroke-width="1.0"/><line x1="534.1" y1="531.2" x2="531.2" y2="531.5" stroke="#98b8bc" stroke-width="1.0"/><line x1="534.5" y1="538.0" x2="528.5" y2="538.0" stroke="#c4808e" stroke-width="1.3"/><line x1="534.1" y1="544.8" x2="531.2" y2="544.5" stroke="#98b8bc" stroke-width="1.0"/><line x1="533.1" y1="551.5" x2="530.1" y2="550.9" stroke="#98b8bc" stroke-width="1.0"/><line x1="531.3" y1="558.1" x2="528.5" y2="557.2" stroke="#98b8bc" stroke-width="1.0"/><line x1="528.9" y1="564.4" x2="526.1" y2="563.2" stroke="#98b8bc" stroke-width="1.0"/><line x1="525.8" y1="570.5" x2="520.6" y2="567.5" stroke="#c4808e" stroke-width="1.3"/><line x1="522.1" y1="576.2" x2="519.7" y2="574.4" stroke="#98b8bc" stroke-width="1.0"/><line x1="517.8" y1="581.5" x2="515.6" y2="579.5" stroke="#98b8bc" stroke-width="1.0"/><line x1="513.0" y1="586.3" x2="511.0" y2="584.1" stroke="#98b8bc" stroke-width="1.0"/><line x1="507.7" y1="590.6" x2="505.9" y2="588.2" stroke="#98b8bc" stroke-width="1.0"/><line x1="502.0" y1="594.3" x2="499.0" y2="589.1" stroke="#c4808e" stroke-width="1.3"/><line x1="495.9" y1="597.4" x2="494.7" y2="594.6" stroke="#98b8bc" stroke-width="1.0"/><line x1="489.6" y1="599.8" x2="488.7" y2="597.0" stroke="#98b8bc" stroke-width="1.0"/><line x1="483.0" y1="601.6" x2="482.4" y2="598.6" stroke="#98b8bc" stroke-width="1.0"/><line x1="476.3" y1="602.6" x2="476.0" y2="599.7" stroke="#98b8bc" stroke-width="1.0"/><line x1="469.5" y1="603.0" x2="469.5" y2="597.0" stroke="#c4808e" stroke-width="1.3"/><line x1="462.7" y1="602.6" x2="463.0" y2="599.7" stroke="#98b8bc" stroke-width="1.0"/><line x1="456.0" y1="601.6" x2="456.6" y2="598.6" stroke="#98b8bc" stroke-width="1.0"/><line x1="449.4" y1="599.8" x2="450.3" y2="597.0" stroke="#98b8bc" stroke-width="1.0"/><line x1="443.1" y1="597.4" x2="444.3" y2="594.6" stroke="#98b8bc" stroke-width="1.0"/><line x1="437.0" y1="594.3" x2="440.0" y2="589.1" stroke="#c4808e" stroke-width="1.3"/><line x1="431.3" y1="590.6" x2="433.1" y2="588.2" stroke="#98b8bc" stroke-width="1.0"/><line x1="426.0" y1="586.3" x2="428.0" y2="584.1" stroke="#98b8bc" stroke-width="1.0"/><line x1="421.2" y1="581.5" x2="423.4" y2="579.5" stroke="#98b8bc" stroke-width="1.0"/><line x1="416.9" y1="576.2" x2="419.3" y2="574.4" stroke="#98b8bc" stroke-width="1.0"/><line x1="413.2" y1="570.5" x2="418.4" y2="567.5" stroke="#c4808e" stroke-width="1.3"/><line x1="410.1" y1="564.4" x2="412.9" y2="563.2" stroke="#98b8bc" stroke-width="1.0"/><line x1="407.7" y1="558.1" x2="410.5" y2="557.2" stroke="#98b8bc" stroke-width="1.0"/><line x1="405.9" y1="551.5" x2="408.9" y2="550.9" stroke="#98b8bc" stroke-width="1.0"/><line x1="404.9" y1="544.8" x2="407.8" y2="544.5" stroke="#98b8bc" stroke-width="1.0"/><line x1="404.5" y1="538.0" x2="410.5" y2="538.0" stroke="#c4808e" stroke-width="1.3"/><line x1="404.9" y1="531.2" x2="407.8" y2="531.5" stroke="#98b8bc" stroke-width="1.0"/><line x1="405.9" y1="524.5" x2="408.9" y2="525.1" stroke="#98b8bc" stroke-width="1.0"/><line x1="407.7" y1="517.9" x2="410.5" y2="518.8" stroke="#98b8bc" stroke-width="1.0"/><line x1="410.1" y1="511.6" x2="412.9" y2="512.8" stroke="#98b8bc" stroke-width="1.0"/><line x1="413.2" y1="505.5" x2="418.4" y2="508.5" stroke="#c4808e" stroke-width="1.3"/><line x1="416.9" y1="499.8" x2="419.3" y2="501.6" stroke="#98b8bc" stroke-width="1.0"/><line x1="421.2" y1="494.5" x2="423.4" y2="496.5" stroke="#98b8bc" stroke-width="1.0"/><line x1="426.0" y1="489.7" x2="428.0" y2="491.9" stroke="#98b8bc" stroke-width="1.0"/><line x1="431.3" y1="485.4" x2="433.1" y2="487.8" stroke="#98b8bc" stroke-width="1.0"/><line x1="437.0" y1="481.7" x2="440.0" y2="486.9" stroke="#c4808e" stroke-width="1.3"/><line x1="443.1" y1="478.6" x2="444.3" y2="481.4" stroke="#98b8bc" stroke-width="1.0"/><line x1="449.4" y1="476.2" x2="450.3" y2="479.0" stroke="#98b8bc" stroke-width="1.0"/><line x1="456.0" y1="474.4" x2="456.6" y2="477.4" stroke="#98b8bc" stroke-width="1.0"/><line x1="462.7" y1="473.4" x2="463.0" y2="476.3" stroke="#98b8bc" stroke-width="1.0"/>
<path d="M445 531.3 L467 532.6 L464 541 Z" fill="#a83444"/>
<path d="M451 578.7 L464 540.5 L472.4 543.5 Z" fill="#3aa0a0"/>
<path d="M466.4 532.7 L474.8 535.7 L472.4 543.5 L464 540.5 Z" fill="#267a76"/>
</svg>

<div class="a" style="left:364px;top:401px;width:9px;height:16px;border:1px solid #eee"></div>
</body></html>
